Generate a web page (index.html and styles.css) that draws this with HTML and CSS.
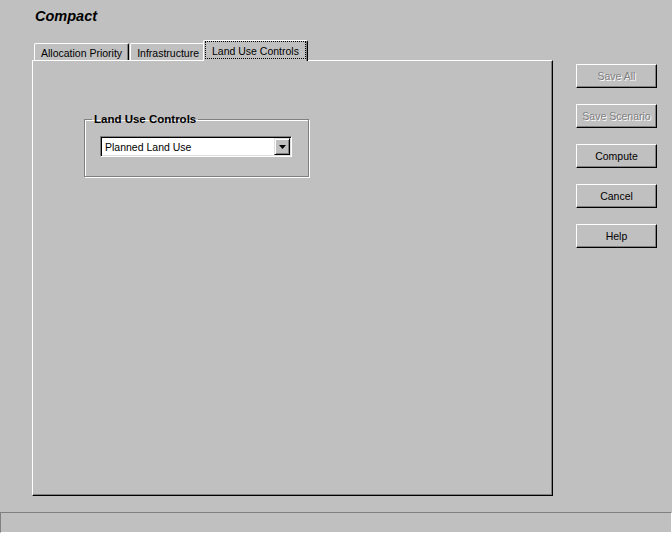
FILE: index.html
```html
<!DOCTYPE html>
<html lang="en">
<head>
    <meta charset="UTF-8">
    <title>Compact</title>
    <link rel="stylesheet" href="styles.css">
</head>
<body>
    <div class="title">Compact</div>

    <div class="main">
        <div class="tab-area">
            <div class="tabstrip">
                <div class="tab">Allocation Priority</div>
                <div class="tab">Infrastructure</div>
                <div class="tab selected"><span class="focus">Land Use Controls</span></div>
            </div>
            <div class="panel">
                <fieldset class="group">
                    <legend>Land Use Controls</legend>
                    <div class="combo">
                        <span class="combo-text">Planned Land Use</span>
                        <span class="combo-btn">
                            <svg width="7" height="4" viewBox="0 0 7 4"><polygon points="0,0 7,0 3.5,4" fill="#000"/></svg>
                        </span>
                    </div>
                </fieldset>
            </div>
        </div>

        <div class="buttons">
            <div class="btn disabled">Save All</div>
            <div class="btn disabled">Save Scenario</div>
            <div class="btn">Compute</div>
            <div class="btn">Cancel</div>
            <div class="btn">Help</div>
        </div>
    </div>

    <div class="statusbar"></div>
</body>
</html>
```

FILE: styles.css
```css
:root {
    --face: #c0c0c0;
    --light: #dfdfdf;
    --shadow: #808080;
}

body {
    margin: 0;
    height: 533px;
    overflow: hidden;
    background-color: var(--face);
    font-family: 'Liberation Sans', Arial, sans-serif;
    font-size: 10.5px;
    color: #000;
}

.title {
    height: 40px;
    box-sizing: border-box;
    padding: 8px 0 0 35px;
    font-size: 14.5px;
    line-height: 17px;
    font-weight: bold;
    font-style: italic;
}

.main {
    display: flex;
    padding-left: 32px;
}

.tab-area {
    width: 521px;
}

/* 选项卡 */
.tabstrip {
    height: 20px;
    display: flex;
    align-items: flex-end;
    padding-left: 2px;
}

.tab {
    height: 17px;
    box-sizing: border-box;
    padding: 2px 6px 0;
    line-height: 15px;
    border: 1px solid;
    border-color: #fff #000 transparent #fff;
    border-bottom: none;
    border-radius: 2px 2px 0 0;
    box-shadow: inset -1px 0 var(--shadow);
    white-space: nowrap;
}

.tab + .tab {
    margin-left: 1px;
}

.tab.selected {
    position: relative;
    z-index: 1;
    height: 21px;
    margin: 0 -1px -1px -3px;
    padding: 0 1px;
    background-color: var(--face);
}

.focus {
    display: block;
    height: 18px;
    box-sizing: border-box;
    padding: 3px 6px 0;
    line-height: 13px;
    border: 1px dotted #000;
}

.panel {
    height: 436px;
    box-sizing: border-box;
    padding: 51px;
    border: 1px solid;
    border-color: #fff #000 #000 #fff;
    box-shadow: inset -1px -1px var(--shadow);
}

/* 分组框 */
.group {
    margin: 0;
    width: 225px;
    box-sizing: border-box;
    padding: 10px 15px 19px;
    border: 1px solid var(--shadow);
    box-shadow: inset 1px 1px #fff, 1px 1px #fff;
}

.group legend {
    margin-left: -8px;
    padding: 0 2px;
    font-size: 11.5px;
    line-height: 14px;
    font-weight: bold;
}

.combo {
    width: 192px;
    height: 21px;
    box-sizing: border-box;
    display: flex;
    justify-content: space-between;
    padding: 1px;
    background-color: #fff;
    border: 1px solid;
    border-color: var(--shadow) #fff #fff var(--shadow);
    box-shadow: inset 1px 1px #000, inset -1px -1px var(--light);
}

.combo-text {
    padding-left: 3px;
    line-height: 19px;
}

.combo-btn {
    width: 16px;
    height: 17px;
    box-sizing: border-box;
    display: flex;
    align-items: center;
    justify-content: center;
    background-color: var(--face);
    border: 1px solid;
    border-color: var(--light) #000 #000 var(--light);
    box-shadow: inset 1px 1px #fff, inset -1px -1px var(--shadow);
}

/* 右侧按钮 */
.buttons {
    margin-left: 23px;
    padding-top: 24px;
    display: flex;
    flex-direction: column;
    gap: 16px;
}

.btn {
    width: 81px;
    height: 24px;
    box-sizing: border-box;
    display: flex;
    align-items: center;
    justify-content: center;
    border: 1px solid;
    border-color: #fff #000 #000 #fff;
    box-shadow: inset -1px -1px var(--shadow);
    white-space: nowrap;
}

.btn.disabled {
    color: var(--shadow);
    text-shadow: 1px 1px #fff;
}

.statusbar {
    margin-top: 16px;
    height: 21px;
    box-sizing: border-box;
    border: 1px solid;
    border-color: var(--shadow) #fff #fff var(--shadow);
}
```
